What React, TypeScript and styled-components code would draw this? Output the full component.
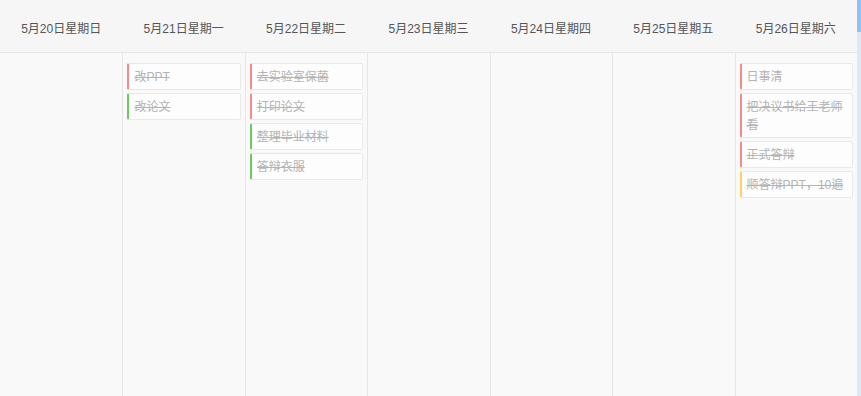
import styled, { createGlobalStyle } from 'styled-components';

type Tone = 'red' | 'green' | 'yellow';

interface ITask {
  id: number;
  title: string;
  tone: Tone;
  done: boolean;
}

interface IDay {
  label: string;
  tasks: ITask[];
}

const toneColors: Record<Tone, string> = {
  red: '#f48a8a',
  green: '#6acb5b',
  yellow: '#fdd25a',
};

const days: IDay[] = [
  { label: '5月20日星期日', tasks: [] },
  {
    label: '5月21日星期一',
    tasks: [
      { id: 1, title: '改PPT', tone: 'red', done: true },
      { id: 2, title: '改论文', tone: 'green', done: true },
    ],
  },
  {
    label: '5月22日星期二',
    tasks: [
      { id: 3, title: '去实验室保菌', tone: 'red', done: true },
      { id: 4, title: '打印论文', tone: 'red', done: true },
      { id: 5, title: '整理毕业材料', tone: 'green', done: true },
      { id: 6, title: '答辩衣服', tone: 'green', done: true },
    ],
  },
  { label: '5月23日星期三', tasks: [] },
  { label: '5月24日星期四', tasks: [] },
  { label: '5月25日星期五', tasks: [] },
  {
    label: '5月26日星期六',
    tasks: [
      { id: 7, title: '日事清', tone: 'red', done: false },
      { id: 8, title: '把决议书给王老师看', tone: 'red', done: true },
      { id: 9, title: '正式答辩', tone: 'red', done: true },
      { id: 10, title: '顺答辩PPT，10遍', tone: 'yellow', done: true },
    ],
  },
];

const GlobalStyle = createGlobalStyle`
  html, body {
    margin: 0;
    padding: 0;
    height: 100%;
  }
  body {
    font-family: "Liberation Sans", "Noto Sans CJK SC", sans-serif;
    background: #f9f9f9;
  }
  #root {
    height: 100%;
  }
`;

const Page = styled.div`
  display: flex;
  height: 100vh;
  overflow: hidden;
`;

const Board = styled.div`
  flex: 1;
  display: grid;
  grid-template-columns: repeat(7, 1fr);
  grid-template-rows: 53px 1fr;
  background: #f9f9f9;
`;

const HeaderCell = styled.div`
  display: flex;
  align-items: center;
  justify-content: center;
  background: #f6f6f7;
  border-bottom: 1px solid #e6e6e6;
  color: #555;
  font-size: 12px;
  padding-top: 2px;
`;

const Column = styled.div<{ $first: boolean }>`
  display: flex;
  flex-direction: column;
  gap: 3px;
  padding: 10px 4px 0 4px;
  border-left: ${(p) => (p.$first ? 'none' : '1px solid #e6e6e6')};
  min-width: 0;
`;

const Card = styled.div<{ $tone: Tone; $done: boolean }>`
  background: #fdfdfd;
  border: 1px solid #e9e9e9;
  border-left: 2px solid ${(p) => toneColors[p.$tone]};
  border-radius: 2px;
  padding: 4px 6px 3px 5px;
  font-size: 12px;
  line-height: 18px;
  color: #b4b4b4;
  text-decoration: ${(p) => (p.$done ? 'line-through' : 'none')};
  word-break: break-all;
`;

const ScrollTrack = styled.div`
  width: 4px;
  display: flex;
  flex-direction: column;
  background: #dbe9f9;
`;

const ScrollThumb = styled.div`
  height: 32px;
  background: #93bfee;
`;

export default function App() {
  return (
    <Page>
      <GlobalStyle />
      <Board>
        {days.map((day) => (
          <HeaderCell key={day.label}>{day.label}</HeaderCell>
        ))}
        {days.map((day, i) => (
          <Column key={day.label} $first={i === 0}>
            {day.tasks.map((task) => (
              <Card key={task.id} $tone={task.tone} $done={task.done}>
                {task.title}
              </Card>
            ))}
          </Column>
        ))}
      </Board>
      <ScrollTrack>
        <ScrollThumb />
      </ScrollTrack>
    </Page>
  );
}
